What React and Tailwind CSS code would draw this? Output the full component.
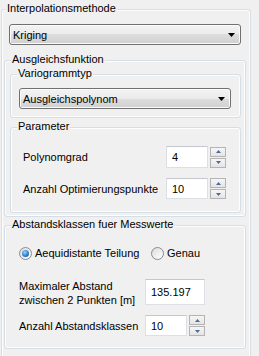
import React from 'react';

function GroupBox({ title, titleLeft = 'left-[6px]', className, children }) {
    return (
        <div className={`relative rounded-[3px] border border-[#d5dfe5] shadow-[inset_0_0_0_1px_#fdfdfd] ${className}`}>
            <span className={`absolute -top-[9px] ${titleLeft} bg-[#f0f0f0] px-[1px] leading-[14px]`}>{title}</span>
            {children}
        </div>
    );
}

function Combo({ value, className }) {
    return (
        <div
            className={`flex h-[21px] items-center justify-between rounded-[3px] border border-[#707070] bg-[linear-gradient(#f3f3f3,#ebebeb_50%,#dddddd_50%,#d0d0d0)] pl-[3px] pr-[5px] shadow-[inset_0_0_0_1px_#fbfbfb] ${className}`}
        >
            <span>{value}</span>
            <svg width="7" height="4" viewBox="0 0 7 4">
                <path d="M0 0h7L3.5 4z" fill="#000" />
            </svg>
        </div>
    );
}

function Spin() {
    return (
        <div className="flex w-[16px] flex-col gap-[1px]">
            {['up', 'down'].map((dir) => (
                <div
                    key={dir}
                    className="flex h-[10px] items-center justify-center border border-[#b4b4b4] bg-[linear-gradient(#f6f6f6,#e4e4e4)]"
                >
                    <svg width="5" height="3" viewBox="0 0 5 3">
                        <path d={dir === 'up' ? 'M0 3h5L2.5 0z' : 'M0 0h5L2.5 3z'} fill="#4d6a9c" />
                    </svg>
                </div>
            ))}
        </div>
    );
}

function TextBox({ value, className }) {
    return (
        <div
            className={`flex items-center border border-[#dcdfe3] border-t-[#c4c7cc] bg-white pl-[5px] ${className}`}
        >
            {value}
        </div>
    );
}

function Radio({ checked, label, className = '' }) {
    return (
        <div className={`flex items-center gap-[3px] ${className}`}>
            <div className="flex h-[13px] w-[13px] items-center justify-center rounded-full border border-[#8a8a8a] bg-[linear-gradient(135deg,#dcdcdc,#ffffff)]">
                {checked && (
                    <div className="h-[7px] w-[7px] rounded-full bg-[radial-gradient(circle_at_40%_35%,#9fd3fb,#2a7fd0_55%,#154c8a)]" />
                )}
            </div>
            <span>{label}</span>
        </div>
    );
}

export default function App() {
    return (
        <div className="h-[356px] w-[259px] overflow-hidden whitespace-nowrap bg-[#f0f0f0] pl-[1px] pt-[9px] font-['Liberation_Sans',Arial,sans-serif] text-[11px] leading-[14px] text-black">
            <GroupBox title="Interpolationsmethode" titleLeft="left-[4px]" className="h-[360px] w-[250px]">
                <Combo value="Kriging" className="ml-[7px] mt-[14px] w-[232px]" />

                <GroupBox title="Ausgleichsfunktion" className="ml-[2px] mt-[15px] h-[157px] w-[242px]">
                    <GroupBox title="Variogrammtyp" className="ml-[5px] mt-[13px] h-[44px] w-[231px]">
                        <Combo value="Ausgleichspolynom" className="ml-[8px] mt-[13px] w-[212px]" />
                    </GroupBox>

                    <GroupBox title="Parameter" className="ml-[5px] mt-[9px] h-[86px] w-[231px]">
                        <div className="ml-[12px] mt-[18px] flex h-[22px] items-center">
                            <span className="w-[143px]">Polynomgrad</span>
                            <TextBox value="4" className="h-[22px] w-[42px]" />
                            <div className="ml-[2px]">
                                <Spin />
                            </div>
                        </div>
                        <div className="ml-[12px] mt-[10px] flex h-[21px] items-center">
                            <span className="w-[143px]">Anzahl Optimierungspunkte</span>
                            <TextBox value="10" className="h-[21px] w-[42px]" />
                            <div className="ml-[2px]">
                                <Spin />
                            </div>
                        </div>
                    </GroupBox>
                </GroupBox>

                <GroupBox title="Abstandsklassen fuer Messwerte" className="ml-[2px] mt-[8px] h-[124px] w-[242px]">
                    <div className="ml-[14px] mt-[20px] flex items-center">
                        <Radio checked label="Aequidistante Teilung" className="w-[132px]" />
                        <Radio label="Genau" />
                    </div>
                    <div className="ml-[14px] mt-[19px] flex items-start">
                        <span className="w-[126px] leading-[14px]">
                            Maximaler Abstand
                            <br />
                            zwischen 2 Punkten [m]
                        </span>
                        <TextBox value="135.197" className="h-[26px] w-[60px]" />
                    </div>
                    <div className="ml-[14px] mt-[8px] flex h-[21px] items-center">
                        <span className="w-[126px]">Anzahl Abstandsklassen</span>
                        <TextBox value="10" className="h-[21px] w-[42px]" />
                        <div className="ml-[2px]">
                            <Spin />
                        </div>
                    </div>
                </GroupBox>
            </GroupBox>
        </div>
    );
}
